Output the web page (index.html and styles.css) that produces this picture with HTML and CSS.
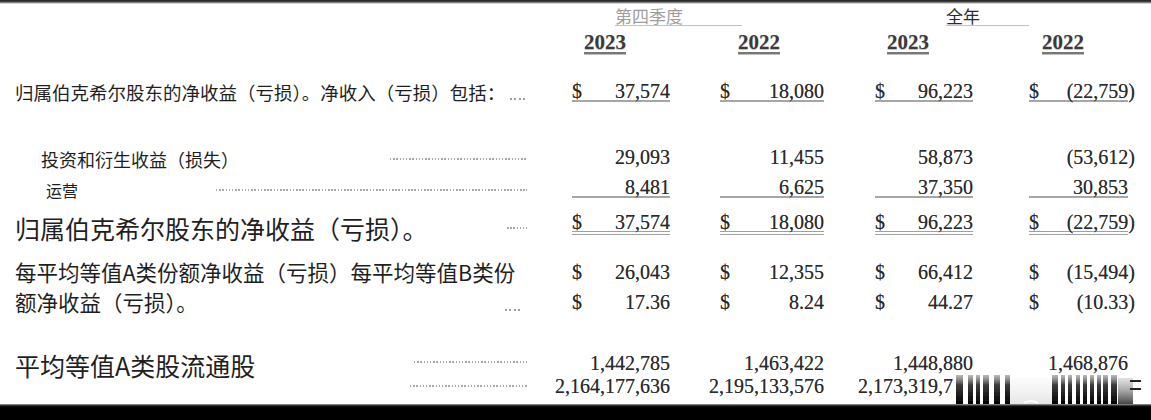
FILE: index.html
```html
<!DOCTYPE html>
<html lang="zh-CN">
<head>
<meta charset="utf-8">
<title>伯克希尔 净收益</title>
<link rel="stylesheet" href="styles.css">
</head>
<body>
<div class="page">
  <div class="topbar"></div>
  <div class="sheet">
    <div class="row head">
      <div class="lbl"></div>
      <div class="period quarter"><span>第四季度</span></div>
      <div class="period fullyear"><span>全年</span></div>
    </div>
    <div class="row years">
      <div class="lbl"></div>
      <div class="yr">2023</div>
      <div class="yr">2022</div>
      <div class="yr">2023</div>
      <div class="yr">2022</div>
    </div>

    <div class="row first">
      <div class="lbl f18w"><span class="txt">归属伯克希尔股东的净收益（亏损）。净收入（亏损）包括：</span><span class="lead dots4"></span></div>
      <div class="val"><div class="amt ul"><span>$</span><span>37,574</span></div></div>
      <div class="val"><div class="amt ul"><span>$</span><span>18,080</span></div></div>
      <div class="val"><div class="amt ul"><span>$</span><span>96,223</span></div></div>
      <div class="val"><div class="amt ul"><span>$</span><span>(22,759<span class="rp">)</span></span></div></div>
    </div>

    <div class="row section">
      <div class="lbl f18 indent drop-s"><span class="txt">投资和衍生收益（损失）</span><span class="lead w137"></span></div>
      <div class="val"><div class="amt"><span></span><span>29,093</span></div></div>
      <div class="val"><div class="amt"><span></span><span>11,455</span></div></div>
      <div class="val"><div class="amt"><span></span><span>58,873</span></div></div>
      <div class="val"><div class="amt"><span></span><span>(53,612<span class="rp">)</span></span></div></div>
    </div>

    <div class="row tight">
      <div class="lbl indent2 drop-s"><span class="txt">运营</span><span class="lead w311"></span></div>
      <div class="val"><div class="amt ul"><span></span><span>8,481</span></div></div>
      <div class="val"><div class="amt ul"><span></span><span>6,625</span></div></div>
      <div class="val"><div class="amt ul"><span></span><span>37,350</span></div></div>
      <div class="val"><div class="amt ul"><span></span><span>30,853</span></div></div>
    </div>

    <div class="row">
      <div class="lbl f25 drop"><span class="txt">归属伯克希尔股东的净收益（亏损）。</span><span class="lead w20"></span></div>
      <div class="val"><div class="amt dul"><span>$</span><span>37,574</span></div></div>
      <div class="val"><div class="amt dul"><span>$</span><span>18,080</span></div></div>
      <div class="val"><div class="amt dul"><span>$</span><span>96,223</span></div></div>
      <div class="val"><div class="amt dul"><span>$</span><span>(22,759<span class="rp">)</span></span></div></div>
    </div>

    <div class="row block">
      <div class="lbl f21"><span class="txt">每平均等值A类份额净收益（亏损）每平均等值B类份</span></div>
      <div class="val"><div class="amt"><span>$</span><span>26,043</span></div></div>
      <div class="val"><div class="amt"><span>$</span><span>12,355</span></div></div>
      <div class="val"><div class="amt"><span>$</span><span>66,412</span></div></div>
      <div class="val"><div class="amt"><span>$</span><span>(15,494<span class="rp">)</span></span></div></div>
    </div>

    <div class="row snug">
      <div class="lbl f21"><span class="txt">额净收益（亏损）。</span><span class="lead dots4 inset"></span></div>
      <div class="val"><div class="amt"><span>$</span><span>17.36</span></div></div>
      <div class="val"><div class="amt"><span>$</span><span>8.24</span></div></div>
      <div class="val"><div class="amt"><span>$</span><span>44.27</span></div></div>
      <div class="val"><div class="amt"><span>$</span><span>(10.33<span class="rp">)</span></span></div></div>
    </div>

    <div class="row block-lg">
      <div class="lbl f25 drop-s"><span class="txt">平均等值A类股流通股</span><span class="lead w113 high"></span></div>
      <div class="val"><div class="amt"><span></span><span>1,442,785</span></div></div>
      <div class="val"><div class="amt"><span></span><span>1,463,422</span></div></div>
      <div class="val"><div class="amt"><span></span><span>1,448,880</span></div></div>
      <div class="val"><div class="amt"><span></span><span>1,468,876</span></div></div>
    </div>

    <div class="row hair">
      <div class="lbl"><span class="lead w117"></span></div>
      <div class="val"><div class="amt"><span></span><span>2,164,177,636</span></div></div>
      <div class="val"><div class="amt"><span></span><span>2,195,133,576</span></div></div>
      <div class="val"><div class="amt cut"><span>2,173,319,7</span></div></div>
      <div class="val"></div>
    </div>
  </div>

  <svg class="watermark" width="192" height="32" viewBox="0 0 192 32" aria-hidden="true">
    <defs>
      <linearGradient id="fade" x1="0" y1="0" x2="0" y2="1">
        <stop offset="0" stop-color="#777" stop-opacity="0.5"/>
        <stop offset="0.35" stop-color="#2a2a2a" stop-opacity="0.92"/>
        <stop offset="1" stop-color="#000"/>
      </linearGradient>
      <linearGradient id="fadeSoft" x1="0" y1="0" x2="0" y2="1">
        <stop offset="0" stop-color="#aaa" stop-opacity="0.35"/>
        <stop offset="1" stop-color="#444"/>
      </linearGradient>
      <linearGradient id="haze" x1="0" y1="0" x2="0" y2="1">
        <stop offset="0" stop-color="#ddd" stop-opacity="0.1"/>
        <stop offset="1" stop-color="#ccc" stop-opacity="0.5"/>
      </linearGradient>
      <filter id="hblur" x="-20%" y="-20%" width="140%" height="140%">
        <feGaussianBlur stdDeviation="0.7 0.3"/>
      </filter>
    </defs>
    <rect x="58" y="6" width="43" height="26" fill="url(#haze)"/>
    <g filter="url(#hblur)" fill="url(#fade)">
      <rect x="4" y="3" width="7" height="29"/>
      <rect x="16" y="3" width="5" height="29"/>
      <rect x="24" y="3" width="4" height="29"/>
      <rect x="31" y="3" width="6" height="29"/>
      <rect x="42" y="3" width="6" height="29"/>
      <rect x="53" y="3" width="5" height="29"/>
      <rect x="100" y="3" width="6" height="29"/>
      <rect x="109" y="3" width="4" height="29"/>
      <rect x="116" y="3" width="4" height="29"/>
      <rect x="124" y="3" width="4" height="29"/>
      <rect x="131" y="3" width="4" height="29"/>
      <rect x="138" y="3" width="4" height="29"/>
      <rect x="145" y="3" width="4" height="29"/>
      <rect x="151" y="3" width="5" height="29"/>
      <rect x="159" y="3" width="6" height="29"/>
    </g>
    <rect x="166" y="6" width="15" height="26" fill="url(#fadeSoft)" filter="url(#hblur)"/>
    <rect x="178" y="8" width="11" height="2" fill="#222"/>
    <rect x="178" y="16" width="11" height="2" fill="#222"/>
    <path d="M72 31 Q79 27 86 31" fill="none" stroke="#fff" stroke-width="1.5"/>
  </svg>

  <div class="bottombar"></div>
</div>
</body>
</html>
```

FILE: styles.css
```css
* { box-sizing: border-box; }

body {
  margin: 0;
  background: #fff;
}

.page {
  position: relative;
  display: flex;
  flex-direction: column;
  width: 1151px;
  height: 420px;
  overflow: hidden;
  background: #fff;
}

.topbar {
  flex: none;
  height: 4px;
  background: linear-gradient(#1e1e1e, #474747 45%, #b8b8b8 80%, #fff);
}

.sheet {
  padding-left: 15px;
}

.row {
  display: grid;
  grid-template-columns: 512px 143px 154px 149px 155px;
  align-items: center;
  height: 28px;
}

.row.head { height: 24px; }
.row.years { height: 28px; }
.row.first { margin-top: 22px; }
.row.section { margin-top: 36px; }
.row.tight { margin-top: 4px; }
.row.block { margin-top: 26px; }
.row.snug { margin-top: 2px; }
.row.block-lg { margin-top: 29px; }
.row.hair { margin-top: 1px; }

/* header */
.period {
  font-family: "Noto Sans CJK SC", "Noto Sans", sans-serif;
  font-size: 17px;
  line-height: 18px;
}
.period span {
  display: inline-block;
  border-bottom: 1px solid #c2c2c2;
}
.quarter {
  grid-column: 2 / 4;
  padding-left: 88px;
  color: #9d9d9d;
}
.quarter span { width: 127px; }
.fullyear {
  grid-column: 4 / 6;
  padding-left: 122px;
  color: #2b2b2b;
}
.fullyear span { width: 83px; }

.yr {
  font-family: "Liberation Serif", "Times New Roman", serif;
  font-weight: bold;
  font-size: 21px;
  line-height: 24px;
  color: #3a3a3a;
  text-align: right;
  padding-right: 44px;
  text-decoration: underline;
  text-decoration-thickness: 1.5px;
  text-underline-offset: 3px;
  text-decoration-color: #777;
  text-shadow: 0 1px 1px rgba(0, 0, 0, 0.25);
}

/* labels */
.lbl {
  display: flex;
  align-items: center;
  height: 100%;
  font-family: "Noto Sans CJK SC", "Noto Sans", sans-serif;
  font-size: 16px;
  color: #1f1f1f;
  white-space: nowrap;
}
.lbl .txt { flex: none; }
.f18w { font-size: 18.5px; }
.f18 { font-size: 18px; }
.f21 { font-size: 21.5px; }
.f25 { font-size: 25px; }
.indent { padding-left: 26px; }
.indent2 { padding-left: 31px; }
.drop { padding-top: 8px; }
.drop-s { padding-top: 4px; }

.lead {
  flex: none;
  margin-left: auto;
  height: 2px;
  background: repeating-linear-gradient(to right, #a8a8a8 0 1.5px, transparent 1.5px 3.2px);
}
.lead.dots4 {
  width: 17px;
  align-self: flex-end;
  margin-bottom: 6px;
  background: repeating-linear-gradient(to right, #9c9c9c 0 2px, transparent 2px 4.5px);
}
.lead.dots4.inset { margin-right: 5px; }
.lead.w137 { width: 137px; }
.lead.w311 { width: 311px; }
.lead.w20 { width: 20px; }
.lead.w113 { width: 113px; }
.lead.w117 { width: 117px; }
.lead.high { margin-bottom: 6px; }

/* amounts */
.val {
  display: flex;
  justify-content: flex-end;
}
.amt {
  display: flex;
  justify-content: space-between;
  font-family: "Liberation Serif", "Times New Roman", serif;
  font-size: 20px;
  line-height: 18px;
  color: #2a2a2a;
  white-space: nowrap;
  text-shadow: 0 0 0.6px rgba(0, 0, 0, 0.55);
}
.row > .val:nth-child(2) .amt { min-width: 98px; }
.row > .val:nth-child(3) .amt { min-width: 104px; }
.row > .val:nth-child(4) .amt { min-width: 98px; }
.row > .val:nth-child(5) .amt { min-width: 99px; }
.row > .val:nth-child(4) .amt.cut {
  min-width: 115px;
  justify-content: flex-start;
}
.amt.ul { border-bottom: 2px solid #a6a6a6; }
.amt.dul { border-bottom: 4px double #a0a0a0; }
.rp { margin-right: -7px; }

.watermark {
  position: absolute;
  left: 952px;
  top: 372px;
}

.bottombar {
  flex: none;
  margin-top: auto;
  height: 16px;
  background: linear-gradient(#a0a0a0, #111 2px, #000 4px);
}
```
